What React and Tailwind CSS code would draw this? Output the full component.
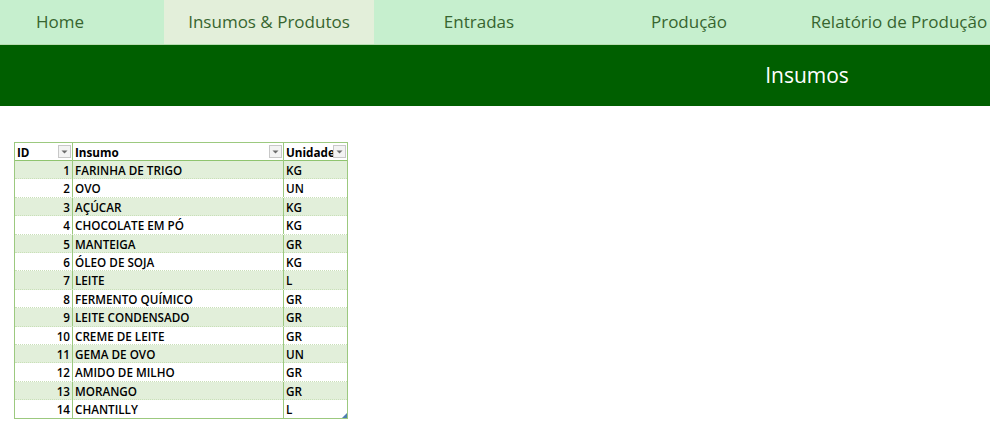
import React from "react";

const rows = [
  [1, "FARINHA DE TRIGO", "KG"],
  [2, "OVO", "UN"],
  [3, "AÇÚCAR", "KG"],
  [4, "CHOCOLATE EM PÓ", "KG"],
  [5, "MANTEIGA", "GR"],
  [6, "ÓLEO DE SOJA", "KG"],
  [7, "LEITE", "L"],
  [8, "FERMENTO QUÍMICO", "GR"],
  [9, "LEITE CONDENSADO", "GR"],
  [10, "CREME DE LEITE", "GR"],
  [11, "GEMA DE OVO", "UN"],
  [12, "AMIDO DE MILHO", "GR"],
  [13, "MORANGO", "GR"],
  [14, "CHANTILLY", "L"],
];

function FilterBtn() {
  return (
    <span className="absolute right-[1px] top-[2px] w-[13px] h-[13px] bg-[#f3f3f3] border border-[#c8c8c8] flex items-center justify-center">
      <svg width="7" height="4" viewBox="0 0 7 4">
        <path d="M0.5 0.5 L6.5 0.5 L3.5 3.5 Z" fill="#6b6b6b" />
      </svg>
    </span>
  );
}

export default function App() {
  const tabs = ["Insumos & Produtos", "Entradas", "Produção", "Relatório de Produção"];
  return (
    <div className="w-[990px] h-[431px] bg-white overflow-hidden" style={{ fontFamily: '"Open Sans", sans-serif' }}>
      <nav className="h-[44px] bg-[#c6efce] flex overflow-hidden text-[17px] text-[#37652f]">
        <div className="w-[164px] shrink-0 flex items-center justify-center pr-[44px]">Home</div>
        {tabs.map((t, i) => (
          <div
            key={t}
            className={
              "w-[210px] shrink-0 flex items-center justify-center whitespace-nowrap " +
              (i === 0 ? "bg-[#e3efda]" : "")
            }
          >
            {t}
          </div>
        ))}
      </nav>
      <div className="h-[62px] bg-[#005f00] border-t border-[#b7dcb0] flex items-center">
        <div className="w-[616px] shrink-0" />
        <div className="w-[384px] text-center text-white text-[21px] pl-[8px]">Insumos</div>
      </div>
      <div className="pt-[36px] pl-[14px]">
        <div className="relative w-[334px] border border-[#9cc97f] text-[11.7px] text-black font-semibold">
          <div className="grid grid-cols-[58px_211px_63px] h-[18px] border-b border-[#8fc46f] bg-white font-bold">
            <div className="relative border-r border-[#9cc97f] pl-[2px] leading-[18px]">
              ID
              <FilterBtn />
            </div>
            <div className="relative border-r border-[#9cc97f] pl-[2px] leading-[18px]">
              Insumo
              <FilterBtn />
            </div>
            <div className="relative pl-[2px] leading-[18px] overflow-hidden whitespace-nowrap">
              Unidade
              <FilterBtn />
            </div>
          </div>
          {rows.map(([id, name, un], i) => (
            <div
              key={id}
              className={
                "grid grid-cols-[58px_211px_63px] h-[18.4px] " +
                (i < rows.length - 1 ? "border-b border-dotted border-[#c9e0b8] " : "") +
                (i % 2 === 0 ? "bg-[#e2efda]" : "bg-white")
              }
            >
              <div className="border-r border-[#9cc97f] text-right pr-[2px] leading-[18px]">{id}</div>
              <div className="border-r border-[#9cc97f] pl-[2px] leading-[18px] whitespace-nowrap">{name}</div>
              <div className="pl-[2px] leading-[18px]">{un}</div>
            </div>
          ))}
          <svg className="absolute right-0 bottom-0" width="5" height="5" viewBox="0 0 5 5">
            <path d="M5 0 L5 5 L0 5 Z" fill="#4f7fb0" />
          </svg>
        </div>
      </div>
    </div>
  );
}
